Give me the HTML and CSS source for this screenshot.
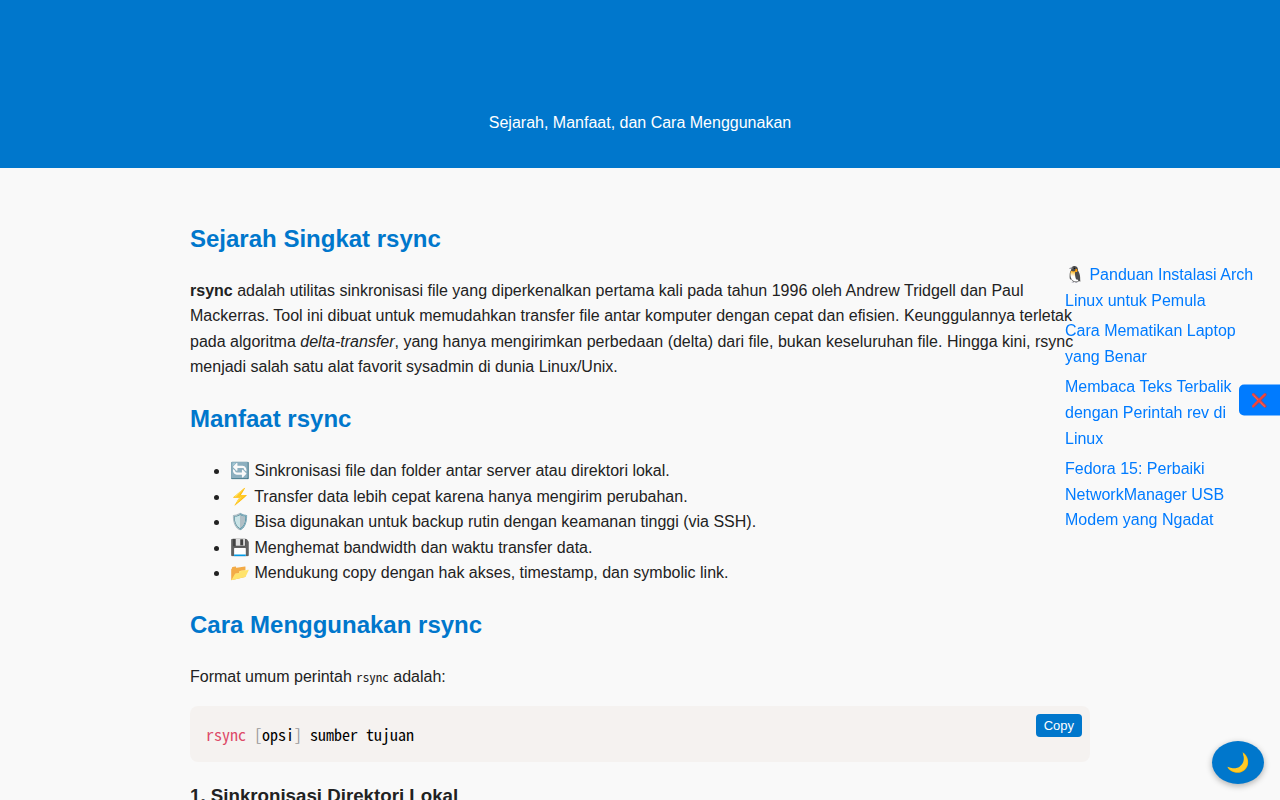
FILE: index.html
```html
<!DOCTYPE html>
<html lang="id">
<head>
<meta charset="utf-8">
<meta name="viewport" content="width=device-width, initial-scale=1">
<title>rsync</title>
<link rel="stylesheet" href="styles.css">
</head>
<body>
<header class="hero">
<p>Sejarah, Manfaat, dan Cara Menggunakan</p>
</header>
<main class="content">
<h2>Sejarah Singkat rsync</h2>
<p><strong>rsync</strong> adalah utilitas sinkronisasi file yang diperkenalkan pertama kali pada tahun 1996 oleh Andrew Tridgell dan Paul Mackerras. Tool ini dibuat untuk memudahkan transfer file antar komputer dengan cepat dan efisien. Keunggulannya terletak pada algoritma <em>delta-transfer</em>, yang hanya mengirimkan perbedaan (delta) dari file, bukan keseluruhan file. Hingga kini, rsync menjadi salah satu alat favorit sysadmin di dunia Linux/Unix.</p>
<h2>Manfaat rsync</h2>
<ul>
<li>🔄 Sinkronisasi file dan folder antar server atau direktori lokal.</li>
<li>⚡ Transfer data lebih cepat karena hanya mengirim perubahan.</li>
<li>🛡️ Bisa digunakan untuk backup rutin dengan keamanan tinggi (via SSH).</li>
<li>💾 Menghemat bandwidth dan waktu transfer data.</li>
<li>📂 Mendukung copy dengan hak akses, timestamp, dan symbolic link.</li>
</ul>
<h2>Cara Menggunakan rsync</h2>
<p>Format umum perintah <code>rsync</code> adalah:</p>
<div class="code-box">
<pre><code><span class="fn">rsync</span> <span class="punct">[</span>opsi<span class="punct">]</span> sumber tujuan</code></pre>
<button class="copy" type="button">Copy</button>
</div>
<h3>1. Sinkronisasi Direktori Lokal</h3>
</main>
<aside class="related">
<ul>
<li><a href="#arch">🐧 Panduan Instalasi Arch Linux untuk Pemula</a></li>
<li><a href="#laptop">Cara Mematikan Laptop yang Benar</a></li>
<li><a href="#rev">Membaca Teks Terbalik dengan Perintah rev di Linux</a></li>
<li><a href="#fedora">Fedora 15: Perbaiki NetworkManager USB Modem yang Ngadat</a></li>
</ul>
</aside>
<button class="close" type="button" aria-label="Tutup">❌</button>
<button class="theme" type="button" aria-label="Mode gelap">🌙</button>
</body>
</html>
```

FILE: styles.css
```css
* { box-sizing: border-box; }
body {
  margin: 0;
  font: 16px/1.6 "Liberation Sans", Arial, sans-serif;
  color: #222;
  background: #f9f9f9;
}
html { overflow: hidden; }
.hero {
  padding: 94px 16px 16px;
  background: #0077cc;
  color: #fff;
  text-align: center;
}
.hero p { margin: 16px 0; }
.content {
  max-width: 932px;
  margin: 32px auto;
  padding: 16px;
}
.content h2 {
  margin: 20px 0;
  font-size: 24px;
  line-height: 38px;
  color: #0077cc;
}
.content h2:first-child { margin-top: 4px; }
.content p { margin: 16px 0; }
.content ul { margin: 20px 0; padding-left: 40px; }
pre, code {
  font-family: "Noto Sans Mono CJK SC", "Noto Sans Mono CJK JP", monospace;
  font-size: 13px;
}
.code-box { position: relative; }
.code-box pre {
  margin: 16px 0;
  padding: 16px;
  border-radius: 8px;
  background: #f5f2f0;
  color: #000;
  font-size: 16px;
  line-height: 24px;
}
.code-box code { font-size: 16px; }
.fn { color: #dd4a68; }
.punct { color: #999; }
.copy {
  position: absolute;
  top: 8px;
  right: 8px;
  padding: 4px 8px;
  border: 0;
  border-radius: 4px;
  background: #0077cc;
  color: #fff;
  font: 13px/15px "Liberation Sans", Arial, sans-serif;
}
.content h3 { margin: 19px 0; line-height: 30px; }
.related {
  position: fixed;
  top: 262px;
  right: 0;
  width: 215px;
  padding-right: 16px;
}
.related ul { margin: 0; padding: 0; list-style: none; }
.related li { margin-bottom: 5px; }
.related a { color: #007bff; text-decoration: none; }
.close {
  position: fixed;
  top: 50%;
  right: 0;
  padding: 8px 12px;
  border: 0;
  border-radius: 5px 0 0 5px;
  background: #007bff;
  font-family: "Liberation Sans", Arial, sans-serif;
  transform: translateY(-50%);
}
.theme {
  position: fixed;
  right: 16px;
  bottom: 16px;
  padding: 10px 14px;
  border: 0;
  border-radius: 50%;
  background: #0077cc;
  font-size: 19px;
  box-shadow: 0 2px 6px rgba(0, 0, 0, .3);
}
```
